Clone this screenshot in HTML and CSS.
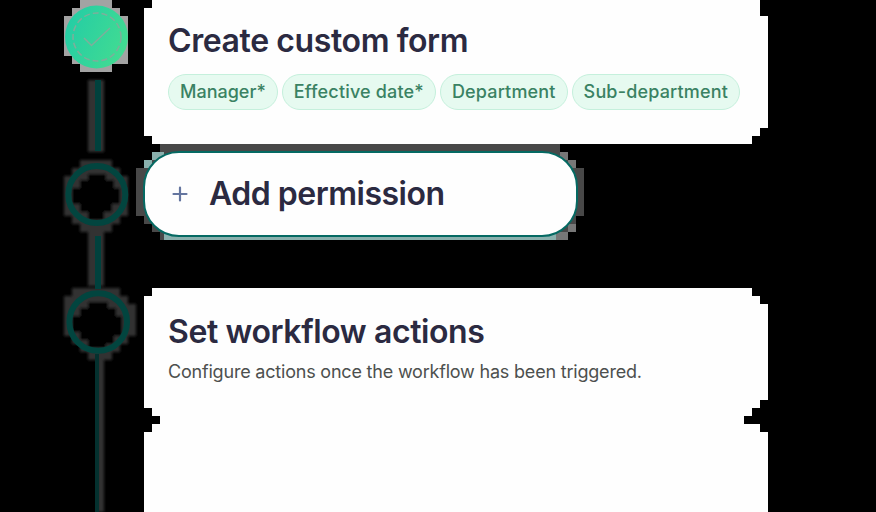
FILE: index.html
```html
<!DOCTYPE html>
<html lang="en">
<head>
<meta charset="utf-8">
<title>Workflow builder</title>
<link rel="stylesheet" href="styles.css">
</head>
<body>
<main class="workflow">
  <svg class="rail" viewBox="0 0 144 512" aria-hidden="true">
    <defs>
      <linearGradient id="done" x1="0" y1="0.3" x2="1" y2="0.7">
        <stop offset="0" stop-color="#24cda5"/>
        <stop offset="1" stop-color="#43dc91"/>
      </linearGradient>
      <filter id="soft"><feGaussianBlur stdDeviation="1.500"/></filter>
    </defs>
    <path fill="#a3a3a3" d="M80 0h32v8h8v8h8v48h-16v8H80v-8h-8v-8h-8V16h8V8h8z"/>
    <circle cx="96.500" cy="37" r="31.500" fill="url(#done)"/>
    <circle cx="97" cy="37" r="24" fill="none" stroke="#7fae9b" stroke-width="1.500" stroke-dasharray="6 3"/>
    <path d="M84 38l7.500 7.500L110 28" fill="none" stroke="#7fae9b" stroke-width="1.500"/>
    <g fill="#333" filter="url(#soft)">
      <path d="M88 80h16v72H88zM88 232h16v54H88zM97 354h7v158h-7z"/>
      <path d="M80 160h32v8h8v8h8v40h-8v8h-8v8H80v-8h-8v-8h-8v-40h8v-8h8z"/>
      <path d="M80 288h40v8h8v8h8v32h-8v8h-8v8h-8v8H88v-8h-8v-8h-8v-8h-8v-40h8v-8h8z"/>
      <path fill="#000" d="M88 174h18v6h8v8h6v16h-8v8h-8v8H88v-8h-8v-8h-8v-16h8v-8h8z"/>
      <path fill="#000" d="M88 302h20v6h8v8h6v20h-8v8h-8v4H88v-8h-8v-8h-8v-16h8v-8h8z"/>
    </g>
    <path fill="#00413d" d="M95 80h6v71h-6zM95 236h6v53h-6z"/>
    <path fill="#04312f" d="M95 354h4v158h-4z"/>
    <g fill="none" stroke="#02453f" stroke-width="6">
      <circle cx="96.800" cy="194.500" r="28.500"/>
      <circle cx="98.200" cy="322" r="28.800"/>
    </g>
  </svg>
  <div class="steps">
    <section class="card card-form">
      <h2 class="title title-form">Create custom form</h2>
      <div class="tags">
        <span class="tag tag-short">Manager*</span>
        <span class="tag">Effective date*</span>
        <span class="tag">Department</span>
        <span class="tag">Sub-department</span>
      </div>
    </section>
    <div class="permission">
      <svg class="halo" viewBox="0 0 456 104" aria-hidden="true">
        <path fill="#484848" d="M32 4h400v8h8v8h8v8h8v48h-8v16h-8v8H32v-8h-8v-8h-8V76H8V28h8v-8h8v-8h8z"/>
        <path fill="#8ab0ad" d="M36 92h392v8H36zM24 12h12v8H24zM16 20h8v8h-8z"/>
        <path fill="#777" d="M432 12h8v8h-8zM440 20h8v8h-8zM440 84h8v8h-8zM428 92h12v8h-12z"/>
      </svg>
      <button class="add">
        <svg class="plus" viewBox="0 0 16 16" aria-hidden="true"><path d="M8 1.500v13M1.500 8h13"/></svg>
        <span class="title title-add">Add permission</span>
      </button>
    </div>
    <section class="card card-actions">
      <h2 class="title title-actions">Set workflow actions</h2>
      <p class="hint">Configure actions once the workflow has been triggered.</p>
    </section>
  </div>
</main>
</body>
</html>
```
FILE: styles.css
```css
* { box-sizing: border-box; }

body {
  margin: 0;
  background: #000;
  font-family: Inter, "Liberation Sans", sans-serif;
  overflow: hidden;
}

.workflow {
  display: grid;
  grid-template-columns: 144px 624px;
  height: 512px;
}

.rail { display: block; width: 144px; height: 512px; }

.steps {
  display: grid;
  grid-template-rows: 144px 144px 224px;
}

.card {
  background: #fefefe;
  padding: 0 24px;
}

.card-form {
  padding-top: 21px;
  clip-path: polygon(8px 0, 616px 0, 616px 16px, 624px 16px, 624px 128px, 616px 128px, 616px 136px, 608px 136px, 608px 144px, 8px 144px, 8px 136px, 0 136px, 0 8px, 8px 8px);
}

.card-actions {
  padding-top: 24px;
  clip-path: polygon(8px 0, 608px 0, 608px 8px, 616px 8px, 616px 16px, 624px 16px, 624px 112px, 616px 112px, 616px 120px, 608px 120px, 608px 128px, 600px 128px, 600px 136px, 616px 136px, 616px 144px, 624px 144px, 624px 224px, 0 224px, 0 144px, 8px 144px, 8px 136px, 16px 136px, 16px 128px, 8px 128px, 8px 120px, 0 120px, 0 8px, 8px 8px);
}

.title {
  margin: 0;
  font-size: 32px;
  line-height: 40px;
  font-weight: 600;
  letter-spacing: -0.4px;
  color: #2b2a41;
  white-space: nowrap;
}

.title-add { letter-spacing: -0.5px; }

.tags {
  display: flex;
  gap: 4px;
  margin-top: 13px;
}

.tag {
  height: 36px;
  padding: 0 11px;
  border: 1px solid #c5f0dc;
  border-radius: 18px;
  background: #e6faf0;
  color: #3a8263;
  font-size: 18px;
  line-height: 34px;
  font-weight: 500;
  letter-spacing: 0.17px;
  white-space: nowrap;
}

.tag-short { letter-spacing: 0; }

.permission {
  position: relative;
  padding-top: 7px;
}

.halo {
  position: absolute;
  left: -16px;
  top: -4px;
  width: 456px;
  height: 104px;
}

.add {
  position: relative;
  display: flex;
  align-items: center;
  gap: 21px;
  width: 435px;
  height: 86px;
  margin: 0 0 0 -1px;
  padding: 0 27px;
  border: 2px solid #056a63;
  border-radius: 36px;
  background: #fefefe;
  font-family: inherit;
}

.plus {
  width: 16px;
  height: 16px;
  fill: none;
  stroke: #64759f;
  stroke-width: 2.2;
  stroke-linecap: round;
}

.hint {
  margin: 6px 0 0;
  font-size: 18px;
  line-height: 27px;
  letter-spacing: -0.2px;
  color: #4d504e;
  white-space: nowrap;
}
```
